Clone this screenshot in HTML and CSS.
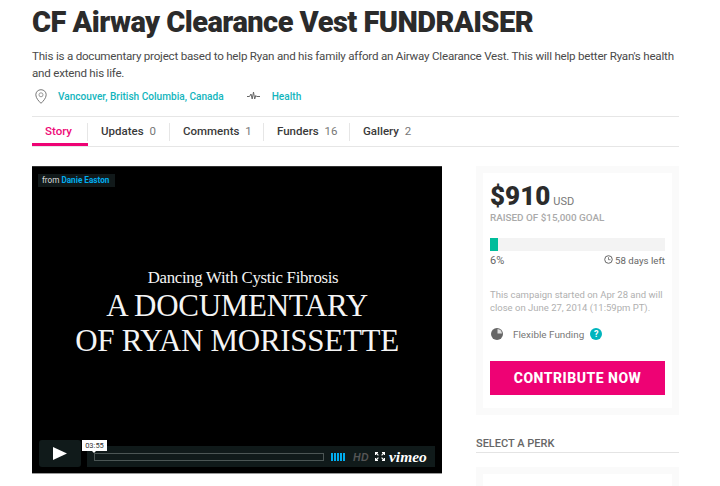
FILE: index.html
```html
<!DOCTYPE html>
<html lang="en">
<head>
<meta charset="utf-8">
<title>CF Airway Clearance Vest FUNDRAISER</title>
<link rel="stylesheet" href="styles.css">
</head>
<body>
<main class="page">
  <h1 class="title">CF Airway Clearance Vest FUNDRAISER</h1>
  <p class="lede">This is a documentary project based to help Ryan and his family afford an Airway Clearance Vest. This will help better Ryan's health and extend his life.</p>
  <div class="meta">
    <svg class="pin" width="12" height="15" viewBox="0 0 12 15"><path d="M6 .7C3 .7.8 3 .8 5.800c0 3.400 3.400 6.800 5.200 8.500 1.800-1.700 5.200-5.100 5.200-8.500C11.200 3 9 .7 6 .7z" fill="none" stroke="#777" stroke-width="1"/><circle cx="6" cy="5.800" r="2" fill="none" stroke="#999" stroke-width="1"/></svg>
    <a class="meta-link loc">Vancouver, British Columbia, Canada</a>
    <svg class="pulse" width="13" height="10" viewBox="0 0 13 10"><path d="M0 5.500h2.500L4 3l1.200 5L6.500 1l1.200 7 1.100-3.500.8 1H13" fill="none" stroke="#666" stroke-width="1"/></svg>
    <a class="meta-link">Health</a>
  </div>
  <nav class="tabs">
    <a class="tab active">Story</a>
    <a class="tab t-updates">Updates <span class="num">0</span></a>
    <a class="tab t-comments">Comments <span class="num">1</span></a>
    <a class="tab t-funders">Funders <span class="num">16</span></a>
    <a class="tab last">Gallery <span class="num">2</span></a>
  </nav>
  <div class="columns">
    <section class="video">
      <div class="byline">from <span class="author">Danie Easton</span></div>
      <div class="slate">
        <div class="slate-sub">Dancing With Cystic Fibrosis</div>
        <div class="slate-main">A DOCUMENTARY<br>OF RYAN MORISSETTE</div>
      </div>
      <div class="controls">
        <button class="play" aria-label="Play"><svg width="14" height="13" viewBox="0 0 14 13"><path d="M0 0l14 6.500L0 13z" fill="#fff"/></svg></button>
        <div class="bar">
          <div class="time">03:55</div>
          <div class="track"></div>
          <div class="volume"><i></i><i></i><i></i><i></i><i></i></div>
          <span class="hd">HD</span>
          <svg class="full" width="10" height="9" viewBox="0 0 10 9"><path d="M0 0h3v1L2.200 1.300 3.800 3 3 3.700 1.300 2.100 1 3H0zM10 0H7v1l.8.3L6.200 3l.8.7 1.700-1.600L9 3h1zM0 9h3V8l-.8-.3L3.800 6 3 5.300 1.300 6.900 1 6H0zM10 9H7V8l.8-.3L6.200 6l.8-.7 1.700 1.600L9 6h1z" fill="#fff"/></svg>
          <span class="vimeo">vimeo</span>
        </div>
      </div>
    </section>
    <aside class="side">
      <div class="panel">
        <div class="card">
          <div class="amount"><b>$910</b> <span class="cur">USD</span></div>
          <div class="goal">RAISED OF $15,000 GOAL</div>
          <div class="progress"><div class="fill" style="width:4.600%"></div></div>
          <div class="stats">
            <span class="pct">6%</span>
            <span class="left"><svg width="9" height="9" viewBox="0 0 9 9"><circle cx="4.500" cy="4.500" r="3.800" fill="none" stroke="#666"/><path d="M4.500 2.200v2.500h2" fill="none" stroke="#666" stroke-width=".8"/></svg> 58 days left</span>
          </div>
          <p class="dates">This campaign started on Apr 28 and will close on June 27, 2014 (11:59pm PT).</p>
          <div class="funding">
            <svg width="12" height="12" viewBox="0 0 12 12"><circle cx="6" cy="6" r="6" fill="#666"/><path d="M6.500 1a5 5 0 0 1 4.500 4.500H6.500z" fill="#ddd"/></svg>
            <span>Flexible Funding</span>
            <span class="help">?</span>
          </div>
          <a class="cta">CONTRIBUTE NOW</a>
        </div>
      </div>
      <h2 class="perk-head">SELECT A PERK</h2>
      <div class="panel perk"><div class="card perk-card"></div></div>
    </aside>
  </div>
</main>
</body>
</html>
```
FILE: styles.css
```css
* { box-sizing: border-box; }
html, body { margin: 0; height: 486px; overflow: hidden; background: #fff; }
body { font-family: "Roboto", "Liberation Sans", sans-serif; color: #444; }
.page { width: 647px; margin-left: 32px; padding-top: 4px; }
.title { margin: 0; font: 900 29px/36px "Roboto", sans-serif; color: #2b2b2b; letter-spacing: -.53px; white-space: nowrap; }
.lede { margin: 8px 0 0; font-size: 11.600px; letter-spacing: -.22px; line-height: 17px; color: #4a4a4a; width: 650px; }
.meta { display: flex; align-items: center; height: 18px; margin-top: 5px; font-size: 10.100px; font-weight: 500; }
.pin { margin: 0 0 0 3px; }
.meta-link { color: #13b5bd; }
.loc { margin: 0 23px 0 11px; }
.pulse { margin-right: 12px; }
.tabs { display: flex; margin-top: 11px; height: 31px; border-top: 1px solid #e6e6e6; border-bottom: 1px solid #e6e6e6; padding-top: 6px; font-size: 11.500px; font-weight: 500; color: #3a3a3a; }
.tab { height: 18px; padding: 1px 0 0 13px; border-right: 1px solid #e6e6e6; }
.tab.active { color: #ee0b78; width: 56px; box-shadow: 0 2px 0 #fff, 0 5px 0 #ee0274; }
.t-updates { width: 82px; }
.t-comments { width: 94px; }
.t-funders { width: 86px; }
.tab.last { border-right: 0; }
.num { color: #777; font-weight: 400; margin-left: 3px; }
.columns { display: flex; justify-content: space-between; margin-top: 19px; }
.video { position: relative; width: 410px; height: 308px; background: #000; border-top: 1px solid #333; border-bottom: 1px solid #999; }
.byline { position: absolute; left: 6px; top: 7px; height: 13px; width: 77px; padding: 0 4px; background: #11191a; color: #ddd; font-size: 8.200px; line-height: 13px; white-space: nowrap; }
.author { color: #00adef; font-weight: 700; }
.slate { padding-top: 100px; text-align: center; color: #f4f4f4; font-family: "Liberation Serif", serif; }
.slate-sub { font-size: 16.800px; line-height: 22px; letter-spacing: -.3px; margin-right: -12px; }
.slate-main { font-size: 31px; line-height: 35px; letter-spacing: -.3px; margin-top: -1px; }
.controls { position: absolute; left: 7px; right: 7px; top: 273px; height: 27px; display: flex; gap: 6px; align-items: flex-end; }
.play { width: 42px; height: 27px; border: 0; padding: 0; margin: 0; background: #101a1a; border-radius: 3px; display: flex; align-items: center; justify-content: center; }
.bar { position: relative; flex: 1; height: 21px; background: #101a1a; display: flex; align-items: center; padding-left: 7px; }
.time { position: absolute; left: -5px; top: -6px; width: 25px; height: 11px; background: #fff; color: #333; font-size: 7.500px; line-height: 11px; text-align: center; }
.time::after { content: ""; position: absolute; left: 10px; bottom: -2px; border: 2px solid transparent; border-bottom: 0; border-top-color: #fff; }
.track { width: 230px; height: 8px; border: 1px solid #4c5655; }
.volume { display: flex; gap: 1px; margin-left: 7px; }
.volume i { width: 2px; height: 8px; background: #00adef; }
.hd { margin-left: 8px; font: italic 700 10.500px "Liberation Sans", sans-serif; color: #555; letter-spacing: .4px; }
.full { margin-left: 6px; }
.vimeo { margin-left: 4px; font: italic 700 15.500px/1 "Liberation Serif", serif; color: #fff; }
.side { width: 203px; }
.panel { background: #fafafa; padding: 7px; height: 249px; }
.card { background: #fff; height: 235px; padding: 9px 7px 0; }
.amount { height: 29px; line-height: 29px; white-space: nowrap; }
.amount b { font: 900 26px/29px "Roboto", sans-serif; color: #2b2b2b; }
.cur { font-size: 11px; color: #777; margin-left: -1px; }
.goal { font-size: 9.900px; font-weight: 500; color: #aaa; line-height: 12px; margin-top: 1px; }
.progress { margin-top: 14px; height: 13px; background: #f3f3f3; }
.fill { height: 13px; background: #00bd9b; }
.stats { display: flex; justify-content: space-between; margin-top: 3px; font-size: 9.700px; line-height: 13px; color: #666; }
.pct { font-size: 11px; }
.dates { margin: 21px 0 0; font-size: 9.500px; line-height: 13px; color: #b0b0b0; }
.funding { display: flex; align-items: center; margin-top: 13px; font-size: 9.900px; color: #777; height: 14px; }
.funding svg { margin-left: 1px; }
.funding span:first-of-type { margin-left: 10px; }
.help { width: 12px; height: 12px; margin-left: 6px; border-radius: 50%; background: #00b5bd; color: #fff; font-size: 9px; font-weight: 700; line-height: 12px; text-align: center; }
.cta { display: block; margin-top: 20px; height: 34px; background: #ee0274; color: #fff; font-size: 14px; font-weight: 800; letter-spacing: .5px; line-height: 34px; text-align: center; }
.perk-head { margin: 22px 0 0; padding-bottom: 2px; border-bottom: 1px solid #e4e4e4; font-size: 11px; font-weight: 500; color: #666; line-height: 13px; }
.perk { margin-top: 14px; height: 60px; }
.perk-card { height: 60px; }
```
